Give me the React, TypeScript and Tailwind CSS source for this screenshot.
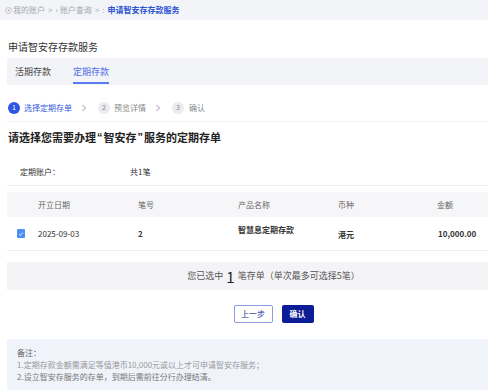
import React from "react";

function Chevron() {
  return (
    <svg width="8" height="8" viewBox="0 0 8 8" className="mx-[8px]">
      <path d="M2.5 1 L5.5 4 L2.5 7" fill="none" stroke="#9a9aa6" strokeWidth="1" />
    </svg>
  );
}

export default function App() {
  const font = "font-['Noto_Sans_CJK_SC','Noto_Sans',sans-serif]";
  return (
    <div className={`w-[488px] h-[391px] overflow-hidden bg-white ${font}`}>
      <div className="w-[540px]">
        {/* breadcrumb */}
        <div className="h-[20px] bg-[#f3f4f8] flex items-center pl-[5px] text-[8px] text-[#a5a7b0]">
          <svg width="7" height="7" viewBox="0 0 8 8" className="mr-[1px]">
            <circle cx="4" cy="4" r="3.4" fill="none" stroke="#b0b2ba" strokeWidth="0.8" />
            <circle cx="4" cy="4" r="1.2" fill="#b0b2ba" />
          </svg>
          <span>我的账户</span>
          <span className="mx-[3px]">&gt;</span>
          <span className="mr-[2px]">›</span>
          <span>账户查询</span>
          <span className="mx-[3px]">&gt;</span>
          <span className="mr-[3px]">:</span>
          <span className="text-[#2d52d6] font-bold">申请智安存存款服务</span>
        </div>

        {/* title */}
        <div className="h-[38px] pt-[14px] flex items-center pl-[8px] text-[10px] text-[#333]">
          申请智安存存款服务
        </div>

        {/* tabs */}
        <div className="ml-[7px] h-[27px] bg-[#f3f4f8] flex items-stretch text-[9px]">
          <div className="ml-[8px] flex items-center text-[#444]">活期存款</div>
          <div className="ml-[22px] relative flex items-center text-[#4a6ae6]">
            定期存款
            <div className="absolute left-0 right-0 bottom-[1px] h-[2px] bg-[#5b7bf0]" />
          </div>
        </div>

        {/* steps */}
        <div className="ml-[7px] h-[37px] pt-[9px] flex items-center border-b border-[#f2f2f4] text-[8px]">
          <div className="w-[12px] h-[12px] rounded-full bg-[#2f55e4] text-white flex items-center justify-center text-[7px] ml-[1px]">1</div>
          <span className="ml-[4px] text-[#3458e0]">选择定期存单</span>
          <Chevron />
          <div className="w-[12px] h-[12px] rounded-full bg-[#ebebef] text-[#888] flex items-center justify-center text-[7px] ml-[2px]">2</div>
          <span className="ml-[4px] text-[#888]">预览详情</span>
          <Chevron />
          <div className="w-[12px] h-[12px] rounded-full bg-[#ebebef] text-[#888] flex items-center justify-center text-[7px] ml-[2px]">3</div>
          <span className="ml-[5px] text-[#888]">确认</span>
        </div>

        {/* heading */}
        <div className="h-[30px] flex items-center pl-[8px] text-[11px] font-bold text-[#222]">
          请选择您需要办理<span className="font-['Liberation_Sans',sans-serif] mx-[1px]">“</span>智安存<span className="font-['Liberation_Sans',sans-serif] mx-[1px]">”</span>服务的定期存单
        </div>

        {/* account */}
        <div className="ml-[7px] h-[34px] pt-[6px] flex items-center border-b border-[#f0f0f2] text-[8px] text-[#333]">
          <span className="ml-[13px] w-[110px]">定期账户：</span>
          <span>共1笔</span>
        </div>

        {/* table */}
        <div className="ml-[7px] mt-[6px]">
          <div className="h-[25px] bg-[#f6f6f8] flex items-center text-[8px] text-[#666]">
            <div className="w-[31px]" />
            <div className="w-[100px]">开立日期</div>
            <div className="w-[100px]">笔号</div>
            <div className="w-[100px]">产品名称</div>
            <div className="w-[99px]">币种</div>
            <div className="w-[60px]">金额</div>
          </div>
          <div className="h-[34px] flex items-center border-b border-[#f0f0f2] text-[8px] text-[#333]">
            <div className="w-[31px] flex justify-start pl-[10px]">
              <div className="w-[8px] h-[9px] rounded-[1px] bg-[#4f8ef5] flex items-center justify-center">
                <svg width="6" height="6" viewBox="0 0 6 6">
                  <path d="M1.2 3.2 L2.5 4.4 L4.8 1.6" fill="none" stroke="white" strokeWidth="0.8" />
                </svg>
              </div>
            </div>
            <div className="w-[100px]">2025-09-03</div>
            <div className="w-[100px] font-bold">2</div>
            <div className="w-[100px] font-bold self-start pt-[7px]">智慧息定期存款</div>
            <div className="w-[100px] font-bold pt-[3px]">港元</div>
            <div className="w-[60px] font-bold text-[#333]">10,000.00</div>
          </div>
        </div>

        {/* selection bar */}
        <div className="ml-[7px] mt-[11px] h-[28px] bg-[#f4f4f6] flex items-center justify-center text-[9px] text-[#555]">
          <span>您已选中</span>
          <span className="mx-[3px] text-[15px] leading-none text-[#222]">1</span>
          <span>笔存单（单次最多可选择5笔）</span>
        </div>

        {/* buttons */}
        <div className="ml-[7px] h-[49px] flex items-center justify-center gap-[9px] pb-[1px]">
          <button className="h-[18px] w-[39px] border border-[#8d9be0] rounded-[2px] bg-white text-[8px] text-[#1d2e9c]">上一步</button>
          <button className="h-[18px] w-[32px] rounded-[2px] bg-[#0c1c96] text-[8px] text-white font-bold">确认</button>
        </div>

        {/* notes */}
        <div className="ml-[7px] h-[51px] bg-[#f0f3fa] pl-[10px] pt-[8px] text-[8px] leading-[12px] text-[#777]">
          <div className="text-[#666]">备注：</div>
          <div className="text-[#999]">1.定期存款金额需满足等值港币10,000元或以上才可申请智安存服务；</div>
          <div className="text-[#777]">2.设立智安存服务的存单，到期后需前往分行办理结清。</div>
        </div>
      </div>
    </div>
  );
}
